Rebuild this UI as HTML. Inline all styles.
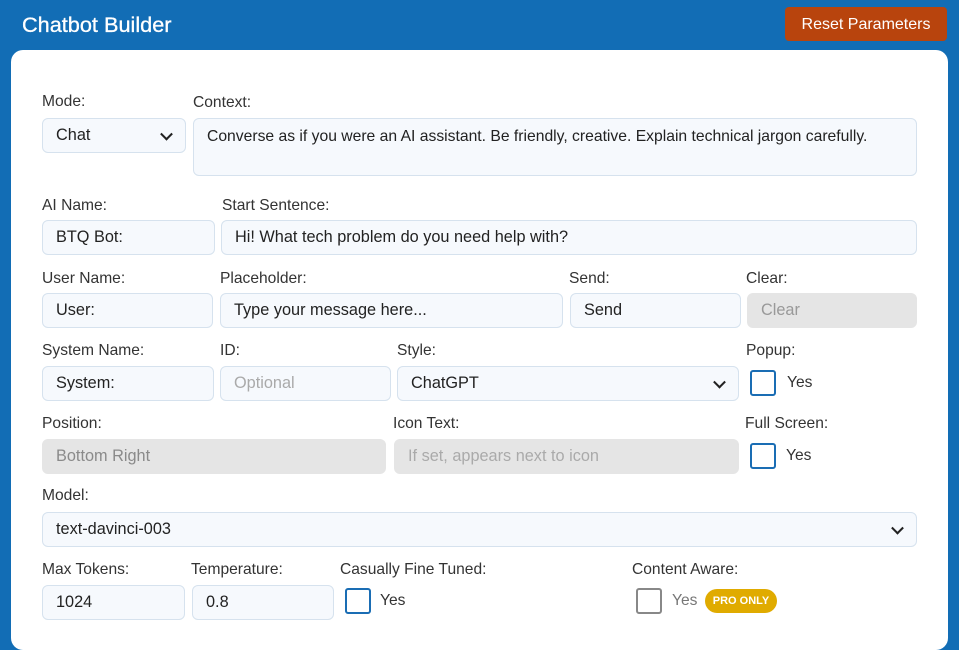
<!DOCTYPE html>
<html><head><meta charset="utf-8"><style>
*{box-sizing:border-box;margin:0;padding:0}
body{width:959px;height:628px;overflow:hidden;background:#126db5;font-family:"Liberation Sans",Arial,sans-serif;position:relative}
.t{position:absolute;color:#fff;font-size:21.7px;left:22px;top:12px;-webkit-text-stroke:0.3px #fff}
.btn{position:absolute;left:785px;top:7px;width:162px;height:34px;background:#b8440d;border-radius:4px;color:#fff;font-size:16px;text-align:center;line-height:35px}
.card{position:absolute;left:11px;top:50px;width:937px;height:600px;background:#fff;border-radius:12px}
.l{position:absolute;font-size:15.6px;color:#333;margin-top:-1px}
.i{position:absolute;background:#f6f9fd;border:1px solid #d6e2ee;border-radius:6px;font-size:16.3px;color:#222;padding-left:13px;display:flex;align-items:center}
.d{background:#e5e5e5;border-color:#e5e5e5;color:#999}
.p{color:#aaa}
.cb{position:absolute;width:26px;height:26px;border:2.5px solid #1a6db4;border-radius:3px}
.y{position:absolute;font-size:15.6px;color:#333}
.ch{position:absolute;right:14px;top:50%;width:9px;height:9px;border-right:2.2px solid #222;border-bottom:2.2px solid #222;transform:translateY(-70%) rotate(45deg)}
</style></head><body>
<div class="t">Chatbot Builder</div>
<div class="btn">Reset Parameters</div>
<div class="card"></div>

<div class="l" style="left:42px;top:94px">Mode:</div>
<div class="l" style="left:193px;top:95px">Context:</div>
<div class="i" style="left:42px;top:118px;width:144px;height:35px">Chat<span class="ch"></span></div>
<div class="i" style="left:193px;top:118px;width:724px;height:58px;align-items:flex-start;padding-top:9px;font-size:15.7px">Converse as if you were an AI assistant. Be friendly, creative. Explain technical jargon carefully.</div>

<div class="l" style="left:42px;top:198px">AI Name:</div>
<div class="l" style="left:222px;top:198px">Start Sentence:</div>
<div class="i" style="left:42px;top:220px;width:173px;height:35px">BTQ Bot:</div>
<div class="i" style="left:221px;top:220px;width:696px;height:35px">Hi! What tech problem do you need help with?</div>

<div class="l" style="left:42px;top:271px">User Name:</div>
<div class="l" style="left:220px;top:271px">Placeholder:</div>
<div class="l" style="left:569px;top:271px">Send:</div>
<div class="l" style="left:746px;top:271px">Clear:</div>
<div class="i" style="left:42px;top:293px;width:171px;height:35px">User:</div>
<div class="i" style="left:220px;top:293px;width:343px;height:35px">Type your message here...</div>
<div class="i" style="left:570px;top:293px;width:171px;height:35px">Send</div>
<div class="i d" style="left:747px;top:293px;width:170px;height:35px">Clear</div>

<div class="l" style="left:42px;top:343px">System Name:</div>
<div class="l" style="left:220px;top:343px">ID:</div>
<div class="l" style="left:397px;top:343px">Style:</div>
<div class="l" style="left:746px;top:343px">Popup:</div>
<div class="i" style="left:42px;top:366px;width:172px;height:35px">System:</div>
<div class="i p" style="left:220px;top:366px;width:171px;height:35px">Optional</div>
<div class="i" style="left:397px;top:366px;width:342px;height:35px">ChatGPT<span class="ch"></span></div>
<div class="cb" style="left:750px;top:370px"></div>
<div class="y" style="left:787px;top:374px">Yes</div>

<div class="l" style="left:42px;top:416px">Position:</div>
<div class="l" style="left:393px;top:416px">Icon Text:</div>
<div class="l" style="left:745px;top:416px">Full Screen:</div>
<div class="i d" style="left:42px;top:439px;width:344px;height:35px;color:#8a8a8a">Bottom Right</div>
<div class="i d" style="left:394px;top:439px;width:345px;height:35px;color:#aaa">If set, appears next to icon</div>
<div class="cb" style="left:750px;top:443px"></div>
<div class="y" style="left:786px;top:447px">Yes</div>

<div class="l" style="left:42px;top:488px">Model:</div>
<div class="i" style="left:42px;top:512px;width:875px;height:35px">text-davinci-003<span class="ch"></span></div>

<div class="l" style="left:42px;top:562px">Max Tokens:</div>
<div class="l" style="left:191px;top:562px">Temperature:</div>
<div class="l" style="left:340px;top:562px">Casually Fine Tuned:</div>
<div class="l" style="left:632px;top:562px">Content Aware:</div>
<div class="i" style="left:42px;top:585px;width:143px;height:35px">1024</div>
<div class="i" style="left:192px;top:585px;width:142px;height:35px">0.8</div>
<div class="cb" style="left:345px;top:588px"></div>
<div class="y" style="left:380px;top:592px">Yes</div>
<div class="cb" style="left:636px;top:588px;border-color:#888"></div>
<div class="y" style="left:672px;top:592px;color:#777">Yes</div>
<div style="position:absolute;left:705px;top:589px;width:72px;height:24px;background:#e0ab00;border-radius:12px;color:#fff;font-size:11px;font-weight:bold;text-align:center;line-height:24px">PRO ONLY</div>
</body></html>
